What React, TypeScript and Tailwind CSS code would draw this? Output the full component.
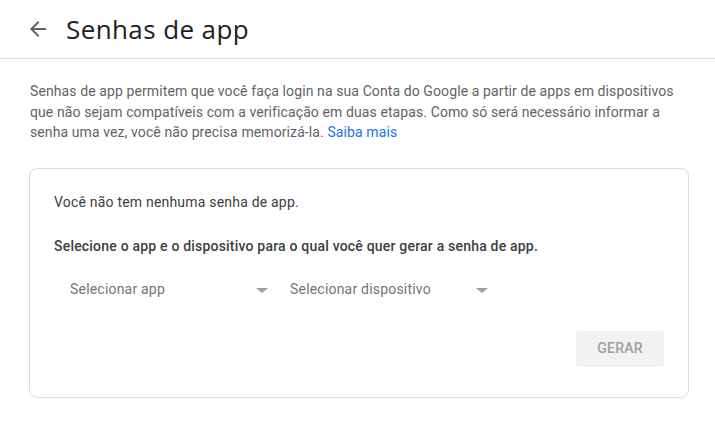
import React from "react";

function Dropdown({ label }: { label: string }) {
  return (
    <div className="relative flex h-[36px] w-[220px] items-center pl-4">
      <span className="text-[14px] tracking-[0.2px] text-[#757575]">{label}</span>
      <span className="absolute right-[6px] top-1/2 -mt-[2px] h-0 w-0 border-x-[6px] border-t-[5px] border-x-transparent border-t-[#9e9e9e]" />
    </div>
  );
}

export default function App() {
  return (
    <div className="min-h-[422px] bg-white" style={{ fontFamily: "Roboto, 'Noto Sans', Arial, sans-serif" }}>
      <header className="flex h-[59px] items-center border-b border-[#dadce0]">
        <div className="ml-[26px] flex h-6 w-6 items-center justify-center text-[#5f6368]">
          <svg width="24" height="24" viewBox="0 0 24 24" fill="currentColor">
            <path d="M20 11H7.83l5.59-5.59L12 4l-8 8 8 8 1.41-1.41L7.83 13H20v-2z" />
          </svg>
        </div>
        <h1 className="ml-4 text-[26px] leading-8 tracking-[0.4px] text-[#202124]" style={{ fontFamily: "'Open Sans', Roboto, sans-serif" }}>
          Senhas de app
        </h1>
      </header>
      <main className="pl-[29px] pr-[20px]">
        <p className="mt-[22px] pl-px text-[14px] leading-[20.5px] tracking-[0.1px] text-[#5f6368]">
          Senhas de app permitem que você faça login na sua Conta do Google a partir de apps em dispositivos
          <br />
          que não sejam compatíveis com a verificação em duas etapas. Como só será necessário informar a
          <br />
          senha uma vez, você não precisa memorizá-la. <a className="text-[#1a73e8]">Saiba mais</a>
        </p>
        <section className="mr-[6px] mt-[25px] rounded-lg border border-[#dadce0] px-6 pb-[30px] pt-[23px]">
          <p className="text-[14px] leading-5 tracking-[0.2px] text-[#3c4043]">Você não tem nenhuma senha de app.</p>
          <p className="mt-6 text-[14px] font-medium leading-5 tracking-[0.2px] text-[#3c4043]">
            Selecione o app e o dispositivo para o qual você quer gerar a senha de app.
          </p>
          <div className="mt-4 flex">
            <Dropdown label="Selecionar app" />
            <Dropdown label="Selecionar dispositivo" />
          </div>
          <div className="mt-[23px] flex justify-end">
            <button className="h-9 w-[88px] rounded bg-[#f2f2f2] text-[14px] font-medium tracking-[0.25px] text-[#9e9e9e]">
              GERAR
            </button>
          </div>
        </section>
      </main>
    </div>
  );
}
